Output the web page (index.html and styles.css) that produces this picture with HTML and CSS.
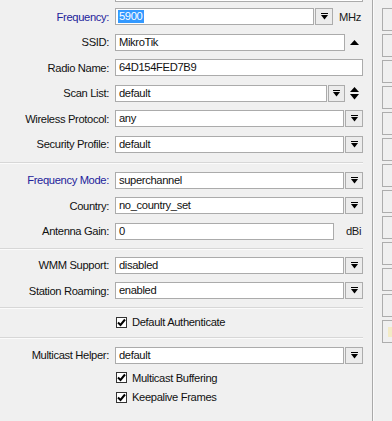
FILE: index.html
```html
<!DOCTYPE html>
<html>
<head>
<meta charset="utf-8">
<link rel="stylesheet" href="styles.css">
</head>
<body>
<div class="window">
  <div class="form">
    <div class="stub"></div>

    <div class="section s1">
      <div class="row">
        <label class="lbl blue">Frequency:</label>
        <div class="ctl">
          <div class="field"><span class="sel">5900</span></div>
          <div class="dd"><svg width="7" height="7" viewBox="0 0 7 7"><rect x="0" y="0" width="7" height="1" fill="#000"/><polygon points="0,2 7,2 3.5,6.5" fill="#000"/></svg></div>
          <span class="unit mhz">MHz</span>
        </div>
      </div>
      <div class="row">
        <label class="lbl">SSID:</label>
        <div class="ctl">
          <div class="field">MikroTik</div>
          <div class="arrows"><svg width="9" height="5" viewBox="0 0 9 5"><polygon points="0,5 9,5 4.5,0" fill="#000"/></svg></div>
        </div>
      </div>
      <div class="row">
        <label class="lbl">Radio Name:</label>
        <div class="ctl">
          <div class="field">64D154FED7B9</div>
        </div>
      </div>
      <div class="row">
        <label class="lbl">Scan List:</label>
        <div class="ctl">
          <div class="field">default</div>
          <div class="dd narrow"><svg width="7" height="7" viewBox="0 0 7 7"><rect x="0" y="0" width="7" height="1" fill="#000"/><polygon points="0,2 7,2 3.5,6.5" fill="#000"/></svg></div>
          <div class="arrows"><svg width="9" height="13" viewBox="0 0 9 13"><polygon points="0,5 9,5 4.5,0" fill="#000"/><polygon points="0,7 9,7 4.5,12.5" fill="#000"/></svg></div>
        </div>
      </div>
      <div class="row">
        <label class="lbl">Wireless Protocol:</label>
        <div class="ctl">
          <div class="field">any</div>
          <div class="dd"><svg width="7" height="7" viewBox="0 0 7 7"><rect x="0" y="0" width="7" height="1" fill="#000"/><polygon points="0,2 7,2 3.5,6.5" fill="#000"/></svg></div>
        </div>
      </div>
      <div class="row">
        <label class="lbl">Security Profile:</label>
        <div class="ctl">
          <div class="field">default</div>
          <div class="dd"><svg width="7" height="7" viewBox="0 0 7 7"><rect x="0" y="0" width="7" height="1" fill="#000"/><polygon points="0,2 7,2 3.5,6.5" fill="#000"/></svg></div>
        </div>
      </div>
    </div>

    <div class="sep sep1"></div>

    <div class="section">
      <div class="row">
        <label class="lbl blue">Frequency Mode:</label>
        <div class="ctl">
          <div class="field">superchannel</div>
          <div class="dd"><svg width="7" height="7" viewBox="0 0 7 7"><rect x="0" y="0" width="7" height="1" fill="#000"/><polygon points="0,2 7,2 3.5,6.5" fill="#000"/></svg></div>
        </div>
      </div>
      <div class="row">
        <label class="lbl">Country:</label>
        <div class="ctl">
          <div class="field">no_country_set</div>
          <div class="dd"><svg width="7" height="7" viewBox="0 0 7 7"><rect x="0" y="0" width="7" height="1" fill="#000"/><polygon points="0,2 7,2 3.5,6.5" fill="#000"/></svg></div>
        </div>
      </div>
      <div class="row">
        <label class="lbl">Antenna Gain:</label>
        <div class="ctl">
          <div class="field">0</div>
          <span class="unit dbi">dBi</span>
        </div>
      </div>
    </div>

    <div class="sep sep2"></div>

    <div class="section">
      <div class="row">
        <label class="lbl">WMM Support:</label>
        <div class="ctl">
          <div class="field">disabled</div>
          <div class="dd"><svg width="7" height="7" viewBox="0 0 7 7"><rect x="0" y="0" width="7" height="1" fill="#000"/><polygon points="0,2 7,2 3.5,6.5" fill="#000"/></svg></div>
        </div>
      </div>
      <div class="row">
        <label class="lbl">Station Roaming:</label>
        <div class="ctl">
          <div class="field">enabled</div>
          <div class="dd"><svg width="7" height="7" viewBox="0 0 7 7"><rect x="0" y="0" width="7" height="1" fill="#000"/><polygon points="0,2 7,2 3.5,6.5" fill="#000"/></svg></div>
        </div>
      </div>
    </div>

    <div class="sep sep3"></div>

    <div class="row check-row auth">
      <span></span>
      <div class="ctl">
        <span class="cb"><svg width="9" height="9" viewBox="0 0 9 9"><path d="M1 4.5 L3.5 7 L8 1.5" fill="none" stroke="#000" stroke-width="2"/></svg></span>
        <span class="cb-text">Default Authenticate</span>
      </div>
    </div>

    <div class="sep sep4"></div>

    <div class="row mh">
      <label class="lbl">Multicast Helper:</label>
      <div class="ctl">
        <div class="field">default</div>
        <div class="dd"><svg width="7" height="7" viewBox="0 0 7 7"><rect x="0" y="0" width="7" height="1" fill="#000"/><polygon points="0,2 7,2 3.5,6.5" fill="#000"/></svg></div>
      </div>
    </div>
    <div class="row check-row mb">
      <span></span>
      <div class="ctl">
        <span class="cb"><svg width="9" height="9" viewBox="0 0 9 9"><path d="M1 4.5 L3.5 7 L8 1.5" fill="none" stroke="#000" stroke-width="2"/></svg></span>
        <span class="cb-text">Multicast Buffering</span>
      </div>
    </div>
    <div class="row check-row kf">
      <span></span>
      <div class="ctl">
        <span class="cb"><svg width="9" height="9" viewBox="0 0 9 9"><path d="M1 4.5 L3.5 7 L8 1.5" fill="none" stroke="#000" stroke-width="2"/></svg></span>
        <span class="cb-text">Keepalive Frames</span>
      </div>
    </div>
  </div>

  <div class="vline"></div>

  <div class="buttons">
    <div class="btn"></div>
    <div class="btn"></div>
    <div class="btn"></div>
    <div class="btn"></div>
    <div class="btn"></div>
    <div class="btn"></div>
    <div class="btn"></div>
    <div class="btn"></div>
    <div class="btn"></div>
    <div class="btn"></div>
    <div class="btn"></div>
    <div class="btn"></div>
    <div class="btn last"><span class="hl"></span></div>
  </div>
</div>
</body>
</html>
```

FILE: styles.css
```css
html, body {
  margin: 0;
  padding: 0;
  background: #f0f0f0;
}
body {
  font-family: "Liberation Sans", Arial, sans-serif;
  font-size: 11.2px;
  letter-spacing: -0.35px;
  color: #111;
}
.window {
  display: flex;
  height: 421px;
  overflow: hidden;
  background: #f0f0f0;
}
.form {
  width: 363px;
  padding-right: 9px;
  flex: none;
}
.stub {
  margin-left: 115px;
  height: 1px;
  border: 1px solid #ababab;
  border-top: none;
  background: #fff;
}
.section {
  display: flex;
  flex-direction: column;
  gap: 8.5px;
}
.s1 { margin-top: 6px; }
.row {
  display: grid;
  grid-template-columns: 109px 1fr;
  column-gap: 6px;
  height: 17px;
  align-items: center;
}
.lbl {
  text-align: right;
  white-space: nowrap;
}
.blue { color: #23239b; }
.ctl {
  display: flex;
  align-items: center;
  height: 17px;
}
.field {
  flex: 1;
  height: 15px;
  line-height: 15px;
  border: 1px solid #ababab;
  background: #fff;
  padding-left: 3px;
  white-space: nowrap;
  overflow: hidden;
}
.sel {
  background: #3399ff;
  color: #fff;
  display: inline-block;
  line-height: 13px;
  padding: 0 1px;
  margin-left: -1px;
}
.dd {
  flex: none;
  width: 16px;
  height: 15px;
  margin-left: 1px;
  border: 1px solid #acacac;
  background: #ececec;
  display: flex;
  align-items: center;
  justify-content: center;
}
.dd.narrow { width: 15px; }
.arrows {
  flex: none;
  width: 18px;
  height: 17px;
  display: flex;
  align-items: center;
  justify-content: center;
}
.unit {
  flex: none;
  color: #1a1a1a;
}
.mhz { width: 24px; padding-left: 6px; }
.dbi { width: 17px; padding-left: 12px; }
.sep {
  height: 0;
  border-top: 1px solid #d7d7d7;
  border-bottom: 1px solid #fbfbfb;
}
.sep1 { margin: 9.5px 0 7.5px; }
.sep2 { margin: 8.5px 0 6.5px; }
.sep3 { margin: 8px 0 4.5px; }
.sep4 { margin: 6.5px 0 7.5px; }
.mb { margin-top: 5.5px; }
.kf { margin-top: 2.5px; }
.cb {
  flex: none;
  width: 11px;
  height: 11px;
  box-sizing: border-box;
  border: 1px solid #333;
  background: #fff;
  margin-left: 1px;
  display: flex;
  align-items: center;
  justify-content: center;
}
.cb-text {
  margin-left: 5px;
  white-space: nowrap;
}
.vline {
  flex: none;
  width: 1px;
  background: #a9a9a9;
  border-right: 1px solid #fafafa;
}
.buttons {
  flex: none;
  margin-left: 8px;
  padding-top: 8px;
  display: flex;
  flex-direction: column;
  gap: 3px;
}
.btn {
  width: 30px;
  height: 21px;
  border: 1px solid #adadad;
  background: #f0f0f0;
  position: relative;
}
.hl {
  position: absolute;
  left: 5px;
  top: 6px;
  width: 4px;
  height: 10px;
  background: #f3ebc6;
}
```
